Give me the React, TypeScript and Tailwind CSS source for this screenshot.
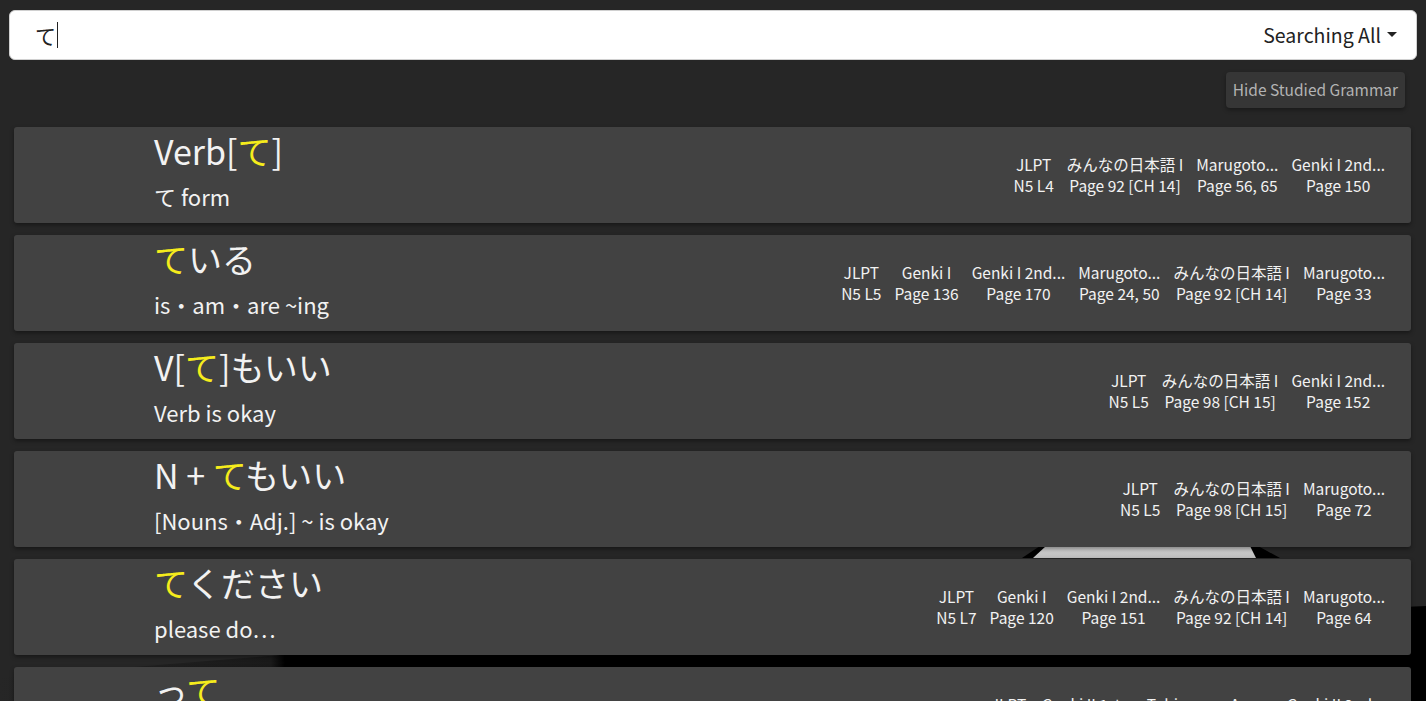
import React from "react";

type Ref = { book: string; page: string };
type Grammar = { title: React.ReactNode; meaning: string; refs: Ref[] };

const Hl = ({ children }: { children: React.ReactNode }) => <span className="text-[#f5ec1c]">{children}</span>;

const grammar: Grammar[] = [
  {
    title: <>Verb[<Hl>て</Hl>]</>,
    meaning: "て form",
    refs: [
      { book: "JLPT", page: "N5 L4" },
      { book: "みんなの日本語 I", page: "Page 92 [CH 14]" },
      { book: "Marugoto...", page: "Page 56, 65" },
      { book: "Genki I 2nd...", page: "Page 150" },
    ],
  },
  {
    title: <><Hl>て</Hl>いる</>,
    meaning: "is・am・are ~ing",
    refs: [
      { book: "JLPT", page: "N5 L5" },
      { book: "Genki I", page: "Page 136" },
      { book: "Genki I 2nd...", page: "Page 170" },
      { book: "Marugoto...", page: "Page 24, 50" },
      { book: "みんなの日本語 I", page: "Page 92 [CH 14]" },
      { book: "Marugoto...", page: "Page 33" },
    ],
  },
  {
    title: <>V[<Hl>て</Hl>]もいい</>,
    meaning: "Verb is okay",
    refs: [
      { book: "JLPT", page: "N5 L5" },
      { book: "みんなの日本語 I", page: "Page 98 [CH 15]" },
      { book: "Genki I 2nd...", page: "Page 152" },
    ],
  },
  {
    title: <>N + <Hl>て</Hl>もいい</>,
    meaning: "[Nouns・Adj.] ~ is okay",
    refs: [
      { book: "JLPT", page: "N5 L5" },
      { book: "みんなの日本語 I", page: "Page 98 [CH 15]" },
      { book: "Marugoto...", page: "Page 72" },
    ],
  },
  {
    title: <><Hl>て</Hl>ください</>,
    meaning: "please do…",
    refs: [
      { book: "JLPT", page: "N5 L7" },
      { book: "Genki I", page: "Page 120" },
      { book: "Genki I 2nd...", page: "Page 151" },
      { book: "みんなの日本語 I", page: "Page 92 [CH 14]" },
      { book: "Marugoto...", page: "Page 64" },
    ],
  },
  {
    title: <>っ<Hl>て</Hl></>,
    meaning: "speaking of…",
    refs: [
      { book: "JLPT", page: "N4 L3" },
      { book: "Genki II 1st...", page: "Page 148" },
      { book: "Tobira...", page: "Page 17" },
      { book: "An...", page: "Page 42" },
      { book: "Genki II 2nd...", page: "Page 159" },
    ],
  },
];

export default function App() {
  return (
    <main
      className="relative h-[701px] overflow-hidden bg-[#262626] text-[#f2f2f2]"
      style={{ fontFamily: '"Noto Sans CJK JP", "Noto Sans", sans-serif' }}
    >
      {/* scene behind the list */}
      <svg className="absolute inset-0 w-full h-full" viewBox="0 0 1426 701" preserveAspectRatio="none">
        <defs>
          <linearGradient id="floor" x1="0" y1="0" x2="1" y2="0">
            <stop offset="0" stopColor="#262626" />
            <stop offset="0.19" stopColor="#1a1a1a" />
            <stop offset="0.2" stopColor="#000" />
          </linearGradient>
          <linearGradient id="lid" x1="0" y1="0" x2="0" y2="1">
            <stop offset="0" stopColor="#d6d6d6" />
            <stop offset="1" stopColor="#bdbdbd" />
          </linearGradient>
        </defs>
        <polygon points="0,678 280,655 1426,606 1426,701 0,701" fill="url(#floor)" />
        <polygon points="1022,558 1040,546 1258,546 1280,558" fill="#000" />
        <polygon points="1033,558 1046,546 1250,546 1256,558" fill="url(#lid)" />
      </svg>

      <div className="relative">
        <div className="pt-[10px] px-[9px]">
          <div className="h-[50px] bg-white rounded-[6px] border border-[#d0d0d0] flex items-center pl-[25px] pr-[19px]">
            <span className="text-[21px] text-[#222] leading-none">て</span>
            <span className="w-px h-[26px] bg-[#222] ml-px" />
            <div className="ml-auto flex items-center gap-[6px] text-[19.5px] text-[#222]">
              <span>Searching All</span>
              <svg width="10" height="6" viewBox="0 0 10 6"><polygon points="0,0 10,0 5,5" fill="#222" /></svg>
            </div>
          </div>
        </div>

        <div className="flex justify-end pr-[21px] mt-[12px]">
          <button className="h-[36px] px-[7px] rounded-[4px] bg-[#363636] text-[15.5px] text-[#b3b3b3] shadow-[0_2px_4px_rgba(0,0,0,0.35)]">
            Hide Studied Grammar
          </button>
        </div>

        <ul className="mt-[19px] ml-[14px] mr-[15px] flex flex-col gap-[12px]">
          {grammar.map((g, i) => (
            <li
              key={i}
              className="h-[96px] bg-[#424242] rounded-[3px] shadow-[0_2px_4px_rgba(0,0,0,0.4)] flex items-center pl-[140px] pr-[26px]"
            >
              <div className="flex flex-col self-start pt-[2px]">
                <div className="text-[34px] leading-[44px] whitespace-nowrap">{g.title}</div>
                <div className="text-[22px] leading-[30px] mt-[8px] whitespace-nowrap">{g.meaning}</div>
              </div>
              <div className="ml-auto flex gap-[13px] text-[15.5px] leading-[21px]">
                {g.refs.map((r, j) => (
                  <div key={j} className="flex flex-col items-center whitespace-nowrap">
                    <span>{r.book}</span>
                    <span>{r.page}</span>
                  </div>
                ))}
              </div>
            </li>
          ))}
        </ul>
      </div>
    </main>
  );
}
